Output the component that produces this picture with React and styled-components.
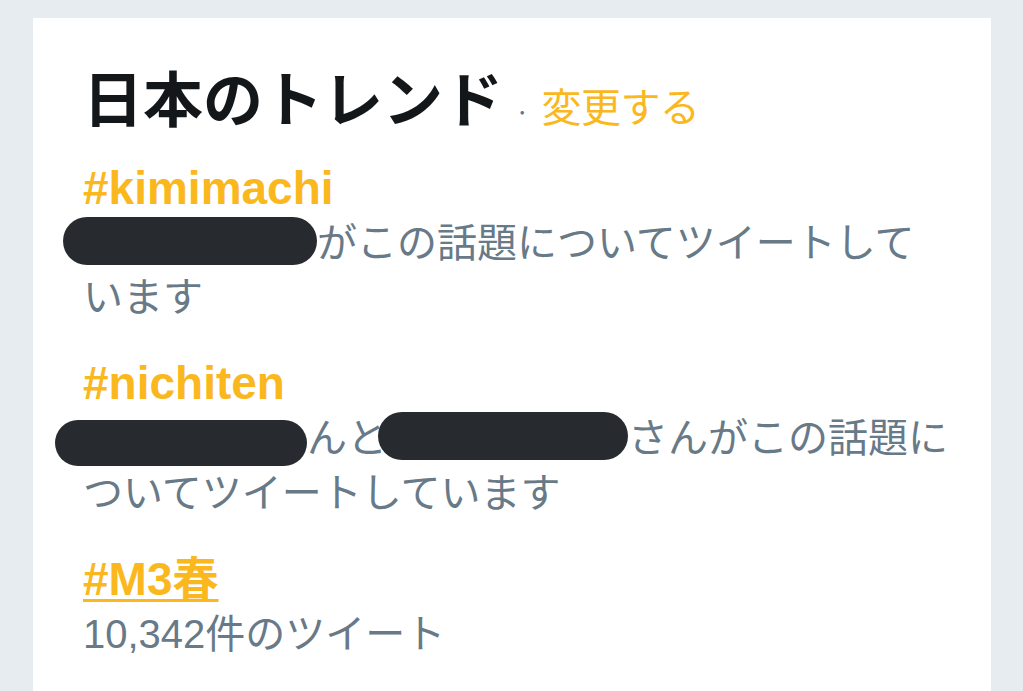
import React from 'react';
import styled, { createGlobalStyle } from 'styled-components';

const GlobalStyle = createGlobalStyle`
  html, body {
    margin: 0;
    padding: 0;
    background: #e6ecf0;
  }
  body {
    font-family: "Liberation Sans", "Noto Sans CJK JP", sans-serif;
  }
`;

const Page = styled.div`
  height: 691px;
  box-sizing: border-box;
  padding: 18px 32px 0 33px;
  overflow: hidden;
`;

const Card = styled.section`
  height: 100%;
  box-sizing: border-box;
  background: #fff;
  padding: 42px 38px 0 50px;
`;

const Heading = styled.h3`
  margin: 0 0 13px;
  font-size: 60px;
  line-height: 72px;
  font-weight: 700;
  color: #14171a;
  font-family: "Noto Sans CJK JP", sans-serif;
  letter-spacing: 0;
`;

const Sep = styled.span`
  font-size: 26px;
  font-weight: 400;
  color: #657786;
  margin: 0 12px 0 12px;
`;

const ChangeLink = styled.a`
  font-size: 40px;
  font-weight: 400;
  color: #fab81e;
  letter-spacing: -0.5px;
  text-decoration: none;
`;

const TrendList = styled.ul`
  list-style: none;
  margin: 0;
  padding: 0;
  display: flex;
  flex-direction: column;
  gap: 31px;
`;

const Trend = styled.li`
  display: flex;
  flex-direction: column;
`;

const TrendName = styled.a`
  align-self: flex-start;
  font-size: 46px;
  line-height: 56px;
  font-weight: 700;
  color: #fab81e;
  text-decoration: ${(p) => (p.$underline ? 'underline' : 'none')};
  text-decoration-thickness: 3px;
  text-underline-offset: 4px;
`;

const TrendDesc = styled.p`
  margin: 0;
  font-size: 40px;
  line-height: 54px;
  color: #687987;
`;

const Redacted = styled.span`
  display: inline-block;
  width: ${(p) => p.$w}px;
  height: ${(p) => p.$h}px;
  margin-left: ${(p) => p.$ml}px;
  vertical-align: ${(p) => p.$va}px;
  background: #272b2f;
  border-radius: 24px;
`;

export default function App() {
  return (
    <Page>
      <GlobalStyle />
      <Card>
        <Heading>
          日本のトレンド
          <Sep>·</Sep>
          <ChangeLink>変更する</ChangeLink>
        </Heading>
        <TrendList>
          <Trend>
            <TrendName>#kimimachi</TrendName>
            <TrendDesc>
              <Redacted $w={254} $h={48} $ml={-20} $va={-8} />
              がこの話題についてツイートしています
            </TrendDesc>
          </Trend>
          <Trend>
            <TrendName>#nichiten</TrendName>
            <TrendDesc>
              <Redacted $w={252} $h={46} $ml={-28} $va={-14} />
              んと
              <Redacted $w={250} $h={48} $ml={-9} $va={-8} />
              さんがこの話題についてツイートしています
            </TrendDesc>
          </Trend>
          <Trend>
            <TrendName $underline>#M3春</TrendName>
            <TrendDesc>10,342件のツイート</TrendDesc>
          </Trend>
        </TrendList>
      </Card>
    </Page>
  );
}
